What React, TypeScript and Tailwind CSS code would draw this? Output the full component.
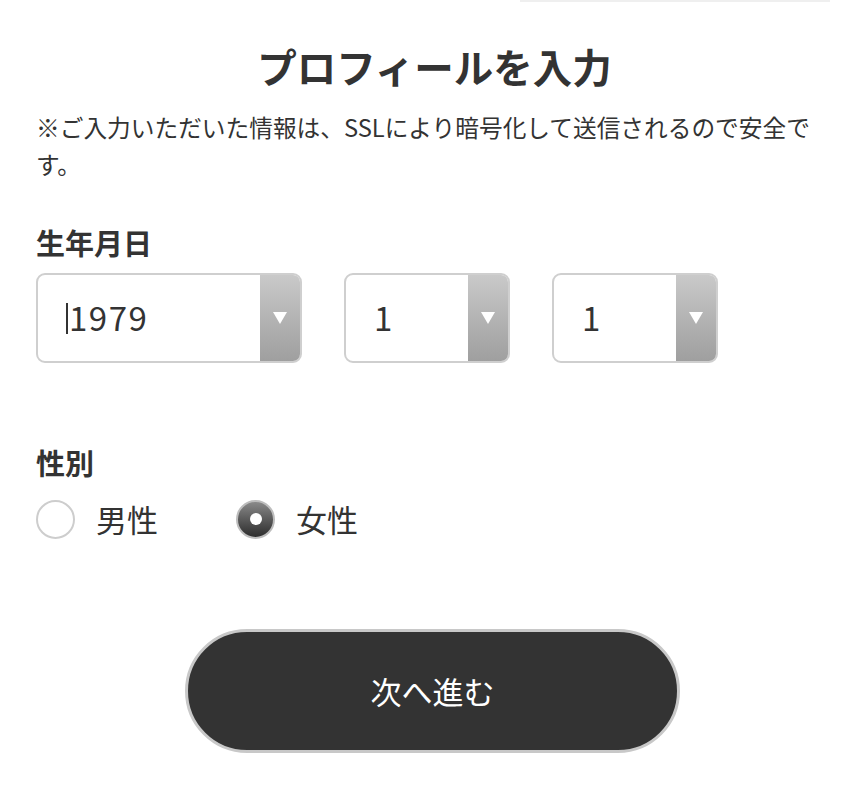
import React, { useState } from "react";

const font = {
  fontFamily: '"Noto Sans CJK JP", "Noto Sans", sans-serif',
};

const SelectBox = ({ value, width, cursor }: { value: string; width: string; cursor?: boolean }) => {
  return (
    <div
      className={`flex h-[90px] ${width} overflow-hidden rounded-[9px] border-2 border-[#cfcfcf] bg-white`}
    >
      <div className="flex flex-1 items-center pl-[28px] text-[33px] text-[#333]">
        {cursor && <span className="mr-[1px] inline-block h-[31px] w-[2px] bg-[#333]" />}
        <span className="tracking-[1.5px]">{value}</span>
      </div>
      <div className="flex w-[40px] items-center justify-center bg-gradient-to-b from-[#c9c9c9] to-[#9f9f9f]">
        <div className="h-0 w-0 border-x-[7px] border-t-[12px] border-x-transparent border-t-white" />
      </div>
    </div>
  );
};

const Radio = ({ label, checked, onClick }: { label: string; checked: boolean; onClick: () => void }) => {
  return (
    <button type="button" onClick={onClick} className="flex items-center gap-[21px]">
      {checked ? (
        <span className="flex h-[39px] w-[39px] items-center justify-center rounded-full border-2 border-[#bdbdbd] bg-gradient-to-b from-[#8a8a8a] to-[#2e2e2e]">
          <span className="h-[12px] w-[12px] rounded-full bg-white" />
        </span>
      ) : (
        <span className="h-[39px] w-[39px] rounded-full border-2 border-[#cdcdcd] bg-white" />
      )}
      <span className="text-[31px] leading-[40px] text-[#333]">{label}</span>
    </button>
  );
};

const App = () => {
  const [gender, setGender] = useState("female");

  return (
    <div className="min-h-[793px] w-[856px] bg-white" style={font}>
      <div className="flex">
        <div className="ml-[520px] h-[2px] w-[310px] bg-[#efefef]" />
      </div>
      <div className="px-[36px]">
        <h1 className="mt-[35px] pl-[13px] text-center text-[39.5px] font-bold leading-[57px] text-[#333]">
          プロフィールを入力
        </h1>
        <p className="mt-[15px] text-[23.7px] leading-[37px] text-[#333]">
          ※ご入力いただいた情報は、SSLにより暗号化して送信されるので安全です。
        </p>

        <h2 className="mt-[39px] text-[29px] font-bold leading-[40px] text-[#333]">生年月日</h2>
        <div className="mt-[11px] flex gap-[42px]">
          <SelectBox value="1979" width="w-[266px]" cursor />
          <SelectBox value="1" width="w-[166px]" />
          <SelectBox value="1" width="w-[166px]" />
        </div>

        <h2 className="mt-[79px] text-[29px] font-bold leading-[40px] text-[#333]">性別</h2>
        <div className="mt-[17px] flex gap-[78px]">
          <Radio label="男性" checked={gender === "male"} onClick={() => setGender("male")} />
          <Radio label="女性" checked={gender === "female"} onClick={() => setGender("female")} />
        </div>

        <div className="mt-[90px] flex justify-center pl-[9px]">
          <button
            type="button"
            className="h-[124px] w-[495px] rounded-full border-[3px] border-[#c8c8c8] bg-[#333] text-[31px] text-white"
          >
            次へ進む
          </button>
        </div>
      </div>
    </div>
  );
};

export default App;
